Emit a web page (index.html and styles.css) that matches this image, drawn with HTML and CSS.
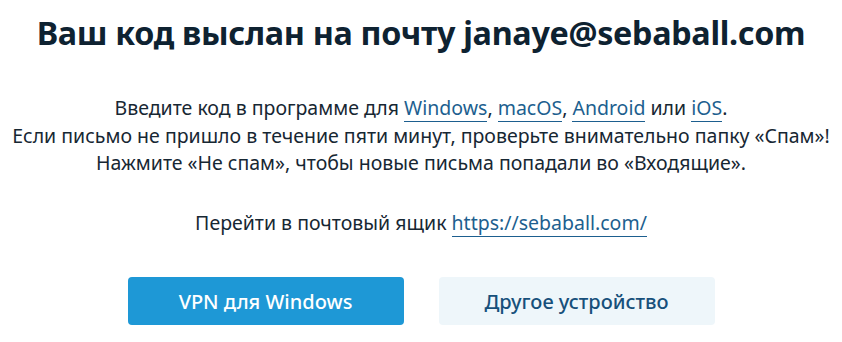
FILE: index.html
```html
<!DOCTYPE html>
<html lang="ru">
<head>
    <meta charset="UTF-8">
    <meta name="viewport" content="width=device-width, initial-scale=1.0">
    <title>Код выслан</title>
    <link rel="stylesheet" href="styles.css">
</head>
<body>
    <div class="page">
        <h1 class="title">Ваш код выслан на почту janaye@sebaball.com</h1>
        <p class="text">
            Введите код в программе для <a href="#">Windows</a>, <a href="#">macOS</a>, <a href="#">Android</a> или <a href="#">iOS</a>.<br>
            Если письмо не пришло в течение пяти минут, проверьте внимательно папку «Спам»!<br>
            Нажмите «Не спам», чтобы новые письма попадали во «Входящие».
        </p>
        <p class="text mailbox">Перейти в почтовый ящик <a href="#">https://sebaball.com/</a></p>
        <div class="buttons">
            <button class="btn primary">VPN для Windows</button>
            <button class="btn secondary">Другое устройство</button>
        </div>
    </div>
</body>
</html>
```

FILE: styles.css
```css
* {
    margin: 0;
    padding: 0;
    box-sizing: border-box;
}

body {
    font-family: 'Noto Sans', 'Open Sans', sans-serif;
    background: #ffffff;
    color: #172733;
}

.page {
    display: flex;
    flex-direction: column;
    align-items: center;
    padding-top: 12px;
}

.title {
    font-size: 32.3px;
    font-weight: 700;
    color: #0e2231;
    line-height: 40px;
    letter-spacing: -0.3px;
}

.text {
    margin-top: 42px;
    font-size: 19.5px;
    line-height: 27.5px;
    text-align: center;
}

.text a {
    color: #1d5f8f;
    text-decoration: none;
    border-bottom: 1px solid #1d5f8f;
}

.mailbox {
    margin-top: 32px;
}

.buttons {
    display: flex;
    gap: 35px;
    margin-top: 41px;
}

.btn {
    width: 276px;
    height: 48px;
    border: none;
    border-radius: 4px;
    font-family: inherit;
    font-size: 20px;
    font-weight: 500;
    cursor: pointer;
}

.btn.primary {
    background: #1e98d6;
    color: #ffffff;
}

.btn.secondary {
    background: #eef6fa;
    color: #17507b;
}
```
